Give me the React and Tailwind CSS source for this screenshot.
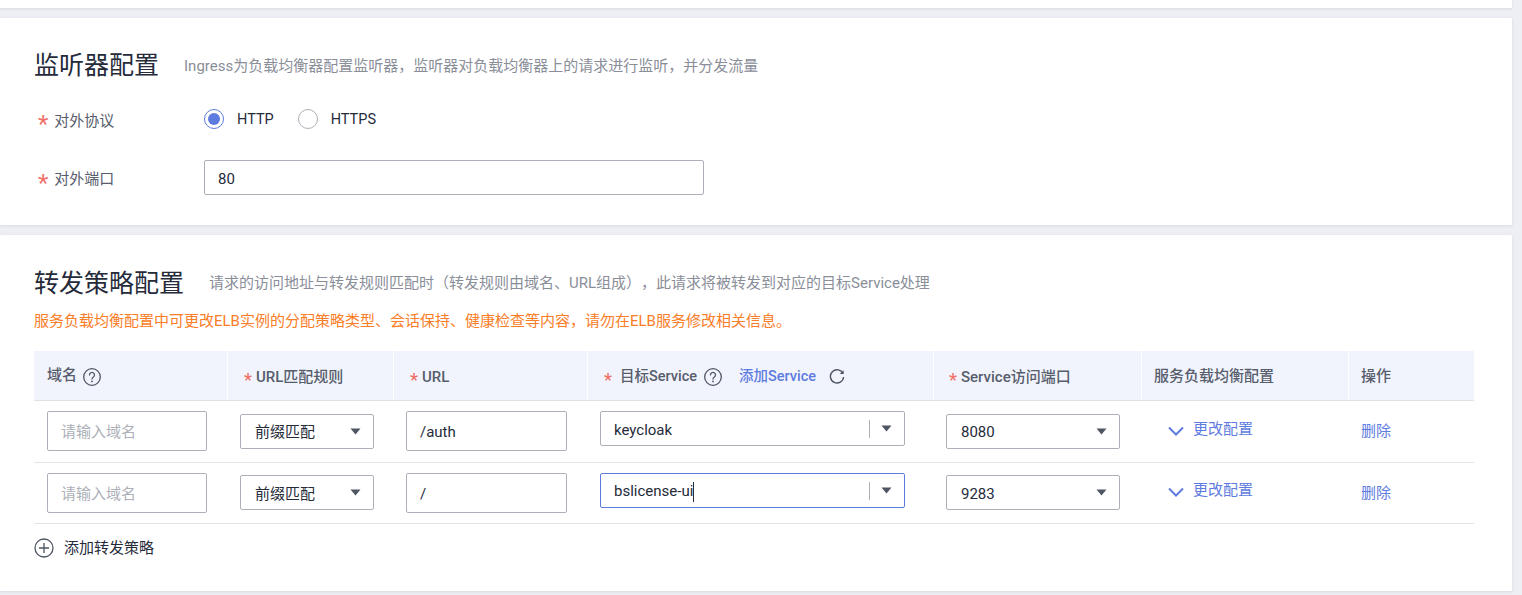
import React from "react";

const gridCols = "grid grid-cols-[194px_166px_194px_346px_208px_207px_125px]";

function Star({ className = "" }) {
  return <span className={"text-[#f0706a] " + className}>*</span>;
}

function Help({ className = "" }) {
  return (
    <svg width="18" height="18" viewBox="1 1 18 18" fill="none" className={"shrink-0 " + className}>
      <circle cx="10" cy="10" r="8.3" stroke="#4f5663" strokeWidth="1.3" />
      <path d="M7.5 7.9a2.5 2.5 0 1 1 3.9 2.1c-.9.6-1.4 1-1.4 2.1" stroke="#4f5663" strokeWidth="1.3" strokeLinecap="round" />
      <circle cx="10" cy="14.4" r=".9" fill="#4f5663" />
    </svg>
  );
}

function Caret({ className = "" }) {
  return (
    <svg width="11" height="7" viewBox="0 0 11 7" className={"shrink-0 " + className}>
      <path d="M0.5 0.5h10L5.5 6.5z" fill="#4f5663" />
    </svg>
  );
}

function Chevron() {
  return (
    <svg width="16" height="10" viewBox="0 0 16 10" fill="none" className="mt-[3px] shrink-0">
      <path d="M1 1.5l7 7 7-7" stroke="#5f7be0" strokeWidth="2" />
    </svg>
  );
}

function Select({ value, w, textShift }) {
  return (
    <div className={"flex h-[35px] items-center justify-between rounded-[2px] border border-[#adb0b8] bg-white pl-[14px] pr-[12px] text-[15px] text-[#252b3a] " + w}>
      <span className={textShift}>{value}</span>
      <Caret />
    </div>
  );
}

function TextBox({ value, placeholder, w }) {
  return (
    <div className={"flex h-[40px] items-center rounded-[2px] border border-[#adb0b8] bg-white px-[13px] text-[15px] " + w}>
      {value ? (
        <span className="translate-y-[1px] text-[#252b3a]">{value}</span>
      ) : (
        <span className="translate-y-[1px] text-[#adb0b8]">{placeholder}</span>
      )}
    </div>
  );
}

function ServiceSelect({ value, focused }) {
  return (
    <div className={"flex h-[35px] w-[305px] items-center rounded-[2px] border bg-white pl-[13px] text-[15px] text-[#252b3a] " + (focused ? "border-[#5e7ce0]" : "border-[#adb0b8]")}>
      <span className={"flex-1 " + (focused ? "translate-y-[1px]" : "translate-y-[2px]")}>
        {value}
        {focused && <span className="inline-block h-[20px] w-px bg-[#252b3a] align-middle" />}
      </span>
      <span className="h-[18px] w-px bg-[#adb0b8]" />
      <Caret className="ml-[11px] mr-[12px]" />
    </div>
  );
}

function Row({ service, port, focused, url, rowClass, selectPad, textShift, linkPad }) {
  return (
    <div className={gridCols + " border-b border-[#e3e4e8] " + rowClass}>
      <div className="pl-[13px] pt-[10px]">
        <TextBox placeholder="请输入域名" w="w-[160px]" />
      </div>
      <div className={"pl-[12px] " + selectPad}>
        <Select value="前缀匹配" w="w-[134px]" textShift={textShift} />
      </div>
      <div className="pl-[12px] pt-[10px]">
        <TextBox value={url} w="w-[161px]" />
      </div>
      <div className="pl-[12px] pt-[10px]">
        <ServiceSelect value={service} focused={focused} />
      </div>
      <div className={"pl-[12px] " + selectPad}>
        <Select value={port} w="w-[174px]" textShift={textShift} />
      </div>
      <div className={"flex h-[38px] items-center gap-[9px] pl-[26px] text-[15px] text-[#5e7ce0] " + linkPad}>
        <Chevron />
        <span>更改配置</span>
      </div>
      <div className="pl-[12px] pt-[19px] text-[15px] leading-[22px] text-[#5e7ce0]">删除</div>
    </div>
  );
}

function HeadCell({ children, last, className = "" }) {
  return (
    <div className={"flex items-center font-medium text-[#575d6c] " + (last ? "" : "border-r border-white ") + className}>
      {children}
    </div>
  );
}

function FieldLabel({ children }) {
  return (
    <div className="flex w-[170px] items-center pl-[4px] text-[#575d6c]">
      <Star className="mr-[6px] translate-y-[5px] text-[24px] leading-[14px]" />
      <span className="translate-y-[2px]">{children}</span>
    </div>
  );
}

export default function App() {
  return (
    <div
      className="h-[595px] w-[1522px] overflow-hidden bg-[#eeeff5] pr-[10px] text-[#252b3a] [text-spacing-trim:space-all]"
      style={{ fontFamily: 'Roboto, "Noto Sans CJK SC", sans-serif' }}
    >
      <div className="h-[8px] bg-white shadow-[0_1px_3px_rgba(37,43,58,0.1)]" />

      <section className="mt-[10px] h-[207px] bg-white pl-[34px] shadow-[0_1px_3px_rgba(37,43,58,0.1)]">
        <div className="flex items-center pt-[31px]">
          <h2 className="text-[25px] leading-[34px] font-normal text-[#252b3a]">监听器配置</h2>
          <p className="ml-[25px] text-[15px] leading-[22px] text-[#8a8e99]">
            Ingress为负载均衡器配置监听器，监听器对负载均衡器上的请求进行监听，并分发流量
          </p>
        </div>
        <div className="mt-[16px] flex h-[40px] items-center text-[15px]">
          <FieldLabel>对外协议</FieldLabel>
          <span className="flex h-[20px] w-[20px] items-center justify-center rounded-full border border-[#5e7ce0]">
            <span className="h-[12px] w-[12px] rounded-full bg-[#5e7ce0]" />
          </span>
          <span className="ml-[13px] translate-y-[1px] text-[14.5px] text-[#252b3a]">HTTP</span>
          <span className="ml-[24px] h-[20px] w-[20px] rounded-full border border-[#adb0b8]" />
          <span className="ml-[13px] translate-y-[1px] text-[14.5px] text-[#252b3a]">HTTPS</span>
        </div>
        <div className="mt-[21px] flex h-[35px] items-center text-[15px]">
          <FieldLabel>对外端口</FieldLabel>
          <div className="flex h-[35px] w-[500px] items-center rounded-[2px] border border-[#adb0b8] pl-[13px] text-[#252b3a]">
            <span className="translate-y-[2px]">80</span>
          </div>
        </div>
      </section>

      <section className="mt-[10px] h-[356px] bg-white pl-[34px] shadow-[0_1px_3px_rgba(37,43,58,0.1)]">
        <div className="flex items-center pt-[32px]">
          <h2 className="text-[25px] leading-[34px] font-normal text-[#252b3a]">转发策略配置</h2>
          <p className="mb-[2px] ml-[25px] text-[15px] leading-[22px] text-[#8a8e99]">
            请求的访问地址与转发规则匹配时（转发规则由域名、URL组成），此请求将被转发到对应的目标Service处理
          </p>
        </div>
        <p className="mt-[9px] text-[15px] leading-[22px] text-[#fa7d28]">
          服务负载均衡配置中可更改ELB实例的分配策略类型、会话保持、健康检查等内容，请勿在ELB服务修改相关信息。
        </p>

        <div className="mt-[19px] w-[1440px]">
          <div className={gridCols + " h-[50px] border-b border-[#dfe1e6] bg-[#f1f4fc] text-[15px]"}>
            <HeadCell className="gap-[6px] pl-[13px]">域名<Help className="mt-[3px]" /></HeadCell>
            <HeadCell className="pl-[16px] pt-[3px]"><Star className="mr-[4px] translate-y-[3px] text-[18px] leading-[14px]" />URL匹配规则</HeadCell>
            <HeadCell className="pl-[16px] pt-[3px]"><Star className="mr-[4px] translate-y-[3px] text-[18px] leading-[14px]" />URL</HeadCell>
            <HeadCell className="pl-[16px] pt-[2px] text-[14.5px]">
              <Star className="mr-[8px] translate-y-[3px] text-[18px] leading-[14px]" />目标Service
              <Help className="ml-[7px]" />
              <span className="ml-[17px] text-[#5e7ce0]">添加Service</span>
              <svg width="16" height="16" viewBox="0 0 16 16" fill="none" className="ml-[13px]">
                <path d="M14 4.6A6.6 6.6 0 1 0 14.6 8" stroke="#4f5663" strokeWidth="1.4" />
                <path d="M14.6 1.2v3.9h-3.9z" fill="#4f5663" />
              </svg>
            </HeadCell>
            <HeadCell className="pl-[15px] pt-[3px]"><Star className="mr-[4px] translate-y-[3px] text-[18px] leading-[14px]" />Service访问端口</HeadCell>
            <HeadCell className="pl-[12px] pt-[2px]">服务负载均衡配置</HeadCell>
            <HeadCell last className="pl-[12px] pt-[2px]">操作</HeadCell>
          </div>
          <Row
            url="/auth"
            service="keycloak"
            port="8080"
            rowClass="h-[62px]"
            selectPad="pt-[13px]"
            textShift="translate-y-[1px]"
            linkPad="pt-[18px]"
          />
          <Row
            url="/"
            service="bslicense-ui"
            port="9283"
            focused
            rowClass="h-[61px]"
            selectPad="pt-[12px]"
            textShift="translate-y-[2px]"
            linkPad="pt-[17px]"
          />
        </div>

        <div className="mt-[13px] flex items-center gap-[10px] text-[15px] text-[#252b3a]">
          <svg width="20" height="20" viewBox="0 0 20 20" fill="none">
            <circle cx="10" cy="10" r="9" stroke="#4f5663" strokeWidth="1.3" />
            <path d="M10 5v10M5 10h10" stroke="#4f5663" strokeWidth="1.3" />
          </svg>
          添加转发策略
        </div>
      </section>
    </div>
  );
}
